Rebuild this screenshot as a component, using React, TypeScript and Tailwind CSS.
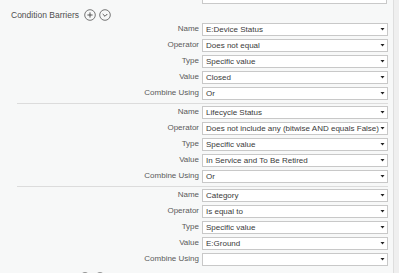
import React from "react";

type Row = { label: string; value: string };

const groups: Row[][] = [
  [
    { label: "Name", value: "E:Device Status" },
    { label: "Operator", value: "Does not equal" },
    { label: "Type", value: "Specific value" },
    { label: "Value", value: "Closed" },
    { label: "Combine Using", value: "Or" },
  ],
  [
    { label: "Name", value: "Lifecycle Status" },
    { label: "Operator", value: "Does not include any (bitwise AND equals False)" },
    { label: "Type", value: "Specific value" },
    { label: "Value", value: "In Service and To Be Retired" },
    { label: "Combine Using", value: "Or" },
  ],
  [
    { label: "Name", value: "Category" },
    { label: "Operator", value: "Is equal to" },
    { label: "Type", value: "Specific value" },
    { label: "Value", value: "E:Ground" },
    { label: "Combine Using", value: "" },
  ],
];

function Arrow() {
  return (
    <svg width="5" height="3" viewBox="0 0 5 3" className="shrink-0">
      <path d="M0.5 0 H4.5 L2.5 2.5 Z" fill="#222" />
    </svg>
  );
}

function CircleBtn({ kind }: { kind: "plus" | "chev" }) {
  return (
    <svg width="12" height="12" viewBox="0 0 12 12" className="shrink-0">
      <circle cx="6" cy="6" r="5.3" fill="none" stroke="#666" strokeWidth="0.9" />
      {kind === "plus" ? (
        <path d="M6 3.4 V8.6 M3.4 6 H8.6" stroke="#444" strokeWidth="0.9" />
      ) : (
        <path d="M3.7 5 L6 7.3 L8.3 5" stroke="#444" strokeWidth="0.9" fill="none" />
      )}
    </svg>
  );
}

function Header({ title }: { title: string }) {
  return (
    <div className="flex items-center h-[9px] pl-[11px] gap-[3px]">
      <span className="text-[8.5px] leading-[12px] text-[#4f4f4f] pr-[2px]">{title}</span>
      <CircleBtn kind="plus" />
      <CircleBtn kind="chev" />
    </div>
  );
}

export default function App() {
  return (
    <div
      className="w-[399px] h-[273px] overflow-hidden bg-[#f7f8f8] flex"
      style={{ fontFamily: '"Liberation Sans", Arial, sans-serif' }}
    >
      <div className="flex-1 flex flex-col">
        <div className="flex">
          <div className="w-[202px]" />
          <div className="w-[185px] h-[4px] bg-white border-x border-b border-[#c9c9c9]" />
        </div>
        <div className="mt-[6px]">
          <Header title="Condition Barriers" />
        </div>
        <div className="mt-[2px] flex flex-col">
          {groups.map((g, gi) => (
            <div key={gi} className="flex flex-col">
              {gi > 0 && (
                <div className="flex">
                  <div className="w-[17px]" />
                  <div className="w-[371px] h-[1px] mt-[2px] bg-[#dcdcdc]" />
                </div>
              )}
              {g.map((r, ri) => (
                <div key={ri} className="flex items-center h-[16px]">
                  <div className="w-[200px] pr-[1px] text-right text-[8px] leading-[12px] text-[#5a5a5a]">
                    {r.label}
                  </div>
                  <div className="ml-[2px] w-[186px] h-[13px] bg-white border border-[#c8c8c8] flex items-center pl-[3px] pr-[2px]">
                    <span className="flex-1 text-[8px] leading-[11px] text-[#3a3a3a] whitespace-nowrap">
                      {r.value}
                    </span>
                    <Arrow />
                  </div>
                </div>
              ))}
            </div>
          ))}
        </div>
        <div className="mt-[5px] flex gap-[3px] pl-[79px]">
          <CircleBtn kind="plus" />
          <CircleBtn kind="chev" />
        </div>
      </div>
      <div className="w-[6px] h-full bg-[#efefef] border-l border-[#dedede]" />
    </div>
  );
}
